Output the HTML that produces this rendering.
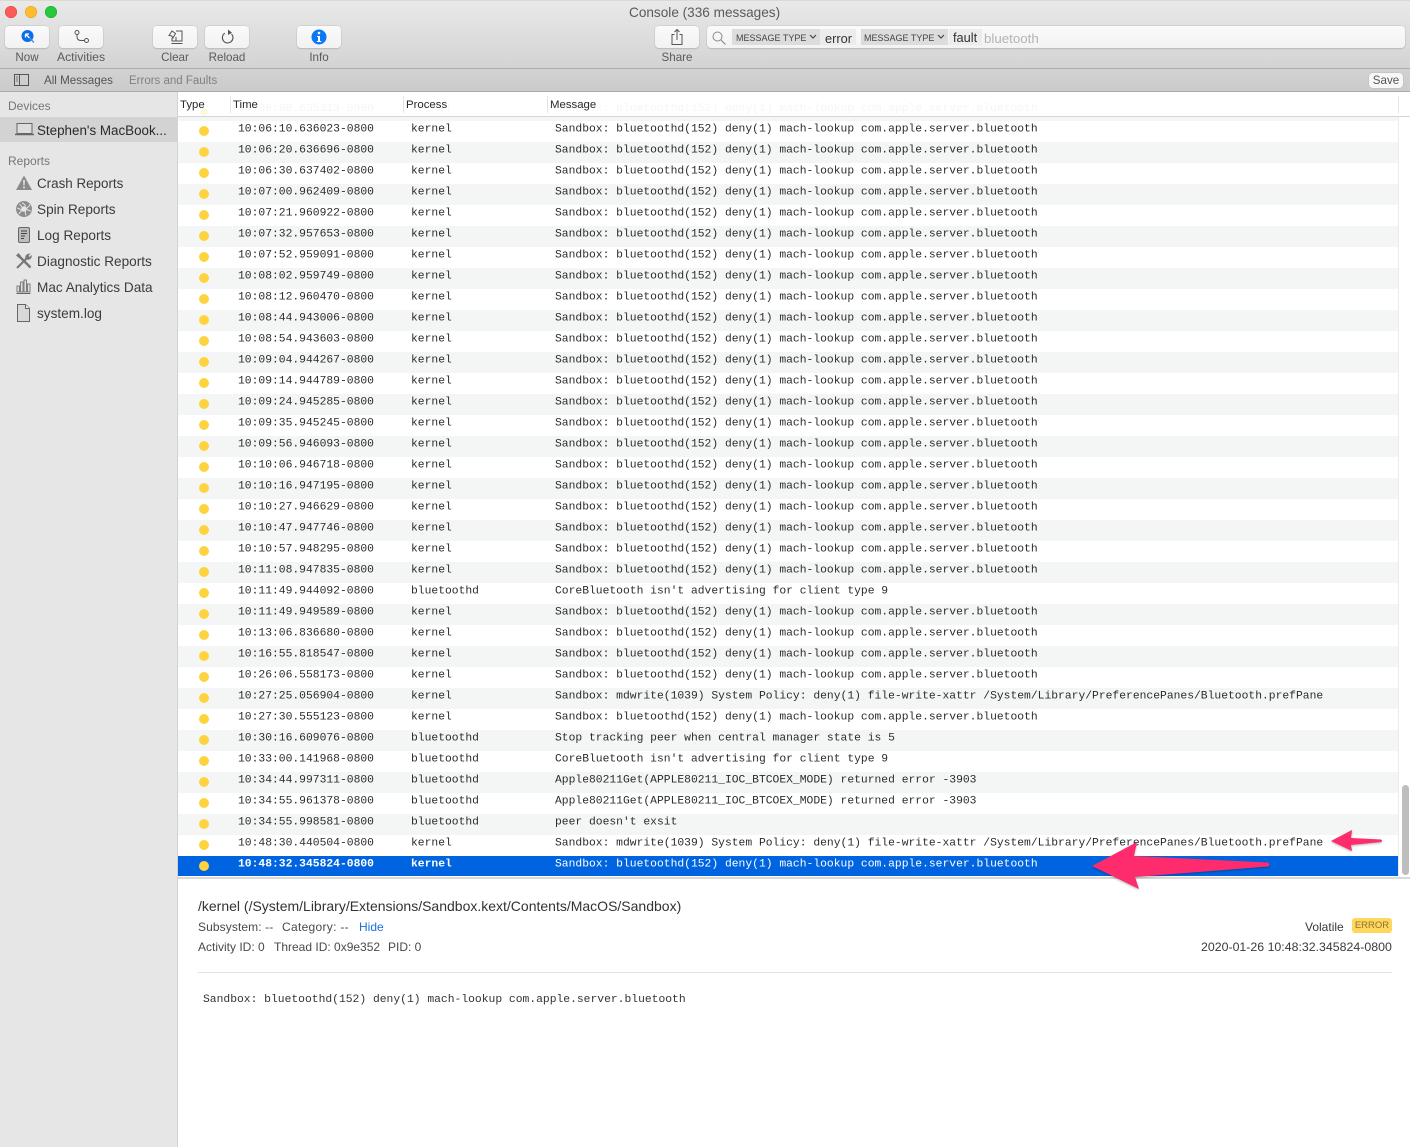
<!DOCTYPE html>
<html><head><meta charset="utf-8"><title>Console</title>
<style>
html,body{margin:0;padding:0;width:1410px;height:1147px;overflow:hidden;background:#fff;font-family:"Liberation Sans",sans-serif}
div,span,svg{position:absolute;white-space:nowrap}
#top{left:0;top:1px;width:1410px;height:67px;background:linear-gradient(#e9e9e9,#d3d3d3);border-bottom:1px solid #aeaeae}
#bar{left:0;top:69px;width:1410px;height:22px;background:linear-gradient(#d2d2d2,#cbcbcb);border-bottom:1px solid #aaa}
.lt{width:12px;height:12px;border-radius:50%;top:6px}
.btn{top:26px;width:44px;height:22px;background:linear-gradient(#fafafa,#f2f2f2);border-radius:4px;box-shadow:0 0 0 .5px #c4c4c4,0 1px 1px #b0b0b0}
.lab{top:51px;font-size:11.6px;line-height:14px;color:#5a5a5a;width:70px;text-align:center}
#side{left:0;top:92px;width:177px;height:1055px;background:#e6e6e6;border-right:1px solid #d2d2d2}
.sh{left:8px;font-size:12px;line-height:14px;color:#767676}
.si{left:37px;font-size:13.6px;line-height:16px;color:#3c3c3c}
.hd{top:98px;font-size:11.4px;line-height:14px;color:#2a2a2a}
#rows{left:178px;top:121px;width:1220px;height:756px}
.r{left:0;width:1220px;height:21px;font:11.33px/14px "Liberation Mono",monospace;color:#2b2b2b}
.g{background:#f4f5f5}
.r b{position:absolute;left:21px;top:5px;width:10px;height:10px;border-radius:50%;background:#fdd43f}
.r i{position:absolute;font-style:normal;white-space:nowrap;top:0;transform:translateY(1.6px)}
.r i:nth-of-type(1){left:60px}.r i:nth-of-type(2){left:233px}.r i:nth-of-type(3){left:377px}
.sel{background:#0064e1;color:#fff;font-weight:bold;height:20px}
.sel i:nth-of-type(3){font-weight:normal}
.d{font-size:12px;line-height:14px;color:#4a4a4a}
</style></head>
<body>
<div id="top"></div>
<div style="left:0;top:0;width:1410px;height:1px;background:#dcd8d2"></div>
<div class="lt" style="left:5px;background:#fc5b57;box-shadow:inset 0 0 0 .5px #df4744"></div>
<div class="lt" style="left:25px;background:#fdbb2e;box-shadow:inset 0 0 0 .5px #de9f34"></div>
<div class="lt" style="left:45px;background:#27c73f;box-shadow:inset 0 0 0 .5px #1dad2b"></div>
<div style="left:629px;top:5px;font-size:13.6px;line-height:16px;color:#5a5a5a">Console (336 messages)</div>

<div class="btn" style="left:5px"><svg style="left:14px;top:2px" width="18" height="18" viewBox="0 0 18 18"><circle cx="8.500" cy="8" r="6" fill="#0a6fe8"/><path d="M6.500 6h3.500M6.500 6v3.500M6.500 6l4 4" stroke="#fff" stroke-width="1.300" fill="none"/><path d="M10.500 10l4.500 4.500" stroke="#4a8ad6" stroke-width="1.300"/></svg></div>
<div class="lab" style="left:-8px">Now</div>
<div class="btn" style="left:59px"><svg style="left:14px;top:3px" width="18" height="16" viewBox="0 0 18 16"><circle cx="4" cy="3.500" r="2" fill="none" stroke="#555"/><circle cx="13.500" cy="11.500" r="2" fill="none" stroke="#555"/><path d="M4 5.500v2c0 3 2 4 4 4H11.500" fill="none" stroke="#555"/></svg></div>
<div class="lab" style="left:46px;top:50px;font-size:12.2px">Activities</div>
<div class="btn" style="left:153px"><svg style="left:14px;top:3px" width="17" height="16" viewBox="0 0 17 16"><path d="M9 2h6v10H5V9" fill="none" stroke="#555"/><path d="M2 6.500L5 2l3.500 2.500L6 9 4.800 7z" fill="none" stroke="#555"/><path d="M9 8v4M4.500 14.500h11" stroke="#555"/></svg></div>
<div class="lab" style="left:140px">Clear</div>
<div class="btn" style="left:205px"><svg style="left:15px;top:2px" width="15" height="17" viewBox="0 0 15 17"><path d="M4.800 5.200A5.300 5.300 0 1 0 11.500 6" fill="none" stroke="#555" stroke-width="1.100"/><path d="M8 1.500L12 4.800L8 7z" fill="#555"/></svg></div>
<div class="lab" style="left:192px">Reload</div>
<div class="btn" style="left:297px"><svg style="left:14px;top:3px" width="16" height="16" viewBox="0 0 16 16"><circle cx="8" cy="8" r="7.500" fill="#0a78f5"/><circle cx="8" cy="4" r="1.300" fill="#fff"/><path d="M6 7h3v5h1.300v1H5.800v-1H7V8H6z" fill="#fff"/></svg></div>
<div class="lab" style="left:284px">Info</div>
<div class="btn" style="left:655px"><svg style="left:15px;top:2px" width="14" height="18" viewBox="0 0 14 18"><path d="M4.500 6.500H2v10h10v-10H9.500M7 12V1.500M4.500 4L7 1.500 9.500 4" fill="none" stroke="#555"/></svg></div>
<div class="lab" style="left:642px">Share</div>

<div style="left:707px;top:26px;width:698px;height:22px;background:linear-gradient(#fafafa,#f3f3f3);border-radius:4px;box-shadow:0 0 0 .5px #c4c4c4,0 1px 1px #b0b0b0"></div>
<svg style="left:711px;top:30px" width="16" height="16" viewBox="0 0 16 16"><circle cx="6.500" cy="6.500" r="4.500" fill="none" stroke="#888"/><path d="M10 10l4.500 4.500" stroke="#888" stroke-width="1.100"/></svg>
<div style="left:732px;top:29px;width:88px;height:16px;background:#dcdcdc"></div>
<div style="left:736px;top:32px;font-size:9px;line-height:13px;color:#444">MESSAGE TYPE</div>
<svg style="left:809px;top:34px" width="8" height="6" viewBox="0 0 8 6"><path d="M1 1l3 3 3-3" fill="none" stroke="#444" stroke-width="1.200"/></svg>
<div style="left:820px;top:29px;width:36px;height:16px;background:#ececec"></div>
<div style="left:825px;top:31px;font-size:12.800px;line-height:15px;color:#333">error</div>
<div style="left:861px;top:29px;width:87px;height:16px;background:#dcdcdc"></div>
<div style="left:864px;top:32px;font-size:9px;line-height:13px;color:#444">MESSAGE TYPE</div>
<svg style="left:937px;top:34px" width="8" height="6" viewBox="0 0 8 6"><path d="M1 1l3 3 3-3" fill="none" stroke="#444" stroke-width="1.200"/></svg>
<div style="left:949px;top:29px;width:33px;height:16px;background:#ececec"></div>
<div style="left:953px;top:30px;font-size:12.800px;line-height:15px;color:#333">fault</div>
<div style="left:984px;top:31px;font-size:13.300px;line-height:15px;color:#b4b4b4">bluetooth</div>

<div id="bar"></div>
<svg style="left:14px;top:74px" width="15" height="12" viewBox="0 0 15 12"><rect x=".5" y=".5" width="14" height="11" fill="none" stroke="#555"/><path d="M5.500 0v12" stroke="#555"/><path d="M2 3h2M2 5h2M2 7h2" stroke="#777"/></svg>
<div style="left:44px;top:74px;font-size:11.6px;line-height:14px;color:#555">All Messages</div>
<div style="left:129px;top:74px;font-size:11.500px;line-height:14px;color:#808080">Errors and Faults</div>
<div style="left:1369px;top:73px;width:34px;height:15px;background:#f7f7f7;border-radius:4px;box-shadow:0 0 0 .5px #bbb;font-size:11.600px;line-height:16px;text-align:center;color:#555">Save</div>

<div id="side"></div>
<div class="sh" style="top:99px">Devices</div>
<div style="left:0;top:117px;width:177px;height:25px;background:#d3d3d3"></div>
<svg style="left:15px;top:123px" width="19" height="13" viewBox="0 0 19 13"><rect x="2" y=".5" width="15" height="10" fill="#ddd" stroke="#666"/><path d="M0 11.500h19" stroke="#666" stroke-width="1.500"/></svg>
<div class="si" style="top:123px;color:#2a2a2a;font-size:13.400px">Stephen's MacBook...</div>
<div class="sh" style="top:154px">Reports</div>
<svg style="left:16px;top:175px" width="16" height="16" viewBox="0 0 16 16"><path d="M8 .5L16 15H0z" fill="#8a8a8a"/><path d="M7.200 5h1.600l-.3 5.500h-1zM7.200 11.500h1.600v1.800H7.200z" fill="#eee"/></svg>
<div class="si" style="top:176px;font-size:13.400px">Crash Reports</div>
<svg style="left:16px;top:201px" width="16" height="16" viewBox="0 0 16 16"><circle cx="8" cy="8" r="8" fill="#8c8c8c"/><circle cx="8" cy="8" r="2.800" fill="#e6e6e6"/><path d="M6 1.500C8 3 9.500 4 9.500 5.500M14 3.500C13 5.500 12 6.500 10.500 7.500M15 10c-2-.5-3.500-1-4.500-2M10 14.500c-.5-2-1-3.500-.5-5M3 13c1-2 2-3 3.500-3.800M1 7c2 .5 3.500 1 4.500 2.500M3.500 3C5 4.500 6 5.500 6 7" stroke="#e4e4e4" fill="none"/></svg>
<div class="si" style="top:202px">Spin Reports</div>
<svg style="left:18px;top:227px" width="12" height="16" viewBox="0 0 12 16"><rect x=".5" y=".5" width="11" height="15" rx="1.500" fill="#bdbdbd" stroke="#666"/><path d="M3 4h6M3 6.500h6M3 9h4M3 11.500h3" stroke="#444"/></svg>
<div class="si" style="top:228px">Log Reports</div>
<svg style="left:16px;top:253px" width="16" height="16" viewBox="0 0 16 16"><path d="M3 3l11.500 11.500" stroke="#777" stroke-width="2.400"/><path d="M1 15L11 5" stroke="#777" stroke-width="2"/><path d="M0 2.500L2.500 0 5 3 3 5z" fill="#777"/><path d="M9.500 6c-1-3 1-5.500 5-5.500L12.500 3l1 1 2.300-2c.4 3.500-2.300 6-6.300 4z" fill="#777"/></svg>
<div class="si" style="top:254px">Diagnostic Reports</div>
<svg style="left:16px;top:279px" width="15" height="15" viewBox="0 0 15 15"><path d="M.5 14.500h14" stroke="#666"/><rect x="1" y="7" width="2.500" height="6" fill="#e0e0e0" stroke="#666" stroke-width=".8"/><rect x="4.500" y="3" width="2.500" height="10" fill="#e0e0e0" stroke="#666" stroke-width=".8"/><rect x="8" y="1" width="2.500" height="12" fill="#e0e0e0" stroke="#666" stroke-width=".8"/><rect x="11.500" y="5" width="2.500" height="8" fill="#e0e0e0" stroke="#666" stroke-width=".8"/></svg>
<div class="si" style="top:280px">Mac Analytics Data</div>
<svg style="left:17px;top:304px" width="13" height="18" viewBox="0 0 13 18"><path d="M.5.500h8l4 4v13H.5z" fill="#d8d8d8" stroke="#666"/><path d="M8.500.5v4h4" fill="#f0f0f0" stroke="#666"/></svg>
<div class="si" style="top:306px">system.log</div>

<div style="left:178px;top:92px;width:1232px;height:24px;background:#fff"></div>
<div style="left:238px;top:102px;font:11.33px/14px 'Liberation Mono',monospace;color:#f5f5f5">10:06:00.635313-0800</div>
<div style="left:411px;top:102px;font:11.33px/14px 'Liberation Mono',monospace;color:#f5f5f5">kernel</div>
<div style="left:555px;top:102px;font:11.33px/14px 'Liberation Mono',monospace;color:#f5f5f5">Sandbox: bluetoothd(152) deny(1) mach-lookup com.apple.server.bluetooth</div>
<div style="left:200px;top:108px;width:8px;height:8px;background:#fdf8e5;border-radius:50%"></div>
<div style="left:178px;top:116px;width:1232px;height:1px;background:#d6d6d6"></div>
<div style="left:178px;top:117px;width:1220px;height:4px;background:#f4f5f5"></div>
<div class="hd" style="left:180px">Type</div>
<div class="hd" style="left:233px">Time</div>
<div class="hd" style="left:406px">Process</div>
<div class="hd" style="left:550px">Message</div>
<div style="left:230px;top:96px;width:1px;height:17px;background:#e4e4e4"></div>
<div style="left:403px;top:96px;width:1px;height:17px;background:#e4e4e4"></div>
<div style="left:547px;top:96px;width:1px;height:17px;background:#e4e4e4"></div>
<div style="left:1398px;top:96px;width:1px;height:17px;background:#e4e4e4"></div>

<div id="rows">
<div class="r" style="top:0"><b></b><i>10:06:10.636023-0800</i><i>kernel</i><i>Sandbox: bluetoothd(152) deny(1) mach-lookup com.apple.server.bluetooth</i></div>
<div class="r g" style="top:21px"><b></b><i>10:06:20.636696-0800</i><i>kernel</i><i>Sandbox: bluetoothd(152) deny(1) mach-lookup com.apple.server.bluetooth</i></div>
<div class="r" style="top:42px"><b></b><i>10:06:30.637402-0800</i><i>kernel</i><i>Sandbox: bluetoothd(152) deny(1) mach-lookup com.apple.server.bluetooth</i></div>
<div class="r g" style="top:63px"><b></b><i>10:07:00.962409-0800</i><i>kernel</i><i>Sandbox: bluetoothd(152) deny(1) mach-lookup com.apple.server.bluetooth</i></div>
<div class="r" style="top:84px"><b></b><i>10:07:21.960922-0800</i><i>kernel</i><i>Sandbox: bluetoothd(152) deny(1) mach-lookup com.apple.server.bluetooth</i></div>
<div class="r g" style="top:105px"><b></b><i>10:07:32.957653-0800</i><i>kernel</i><i>Sandbox: bluetoothd(152) deny(1) mach-lookup com.apple.server.bluetooth</i></div>
<div class="r" style="top:126px"><b></b><i>10:07:52.959091-0800</i><i>kernel</i><i>Sandbox: bluetoothd(152) deny(1) mach-lookup com.apple.server.bluetooth</i></div>
<div class="r g" style="top:147px"><b></b><i>10:08:02.959749-0800</i><i>kernel</i><i>Sandbox: bluetoothd(152) deny(1) mach-lookup com.apple.server.bluetooth</i></div>
<div class="r" style="top:168px"><b></b><i>10:08:12.960470-0800</i><i>kernel</i><i>Sandbox: bluetoothd(152) deny(1) mach-lookup com.apple.server.bluetooth</i></div>
<div class="r g" style="top:189px"><b></b><i>10:08:44.943006-0800</i><i>kernel</i><i>Sandbox: bluetoothd(152) deny(1) mach-lookup com.apple.server.bluetooth</i></div>
<div class="r" style="top:210px"><b></b><i>10:08:54.943603-0800</i><i>kernel</i><i>Sandbox: bluetoothd(152) deny(1) mach-lookup com.apple.server.bluetooth</i></div>
<div class="r g" style="top:231px"><b></b><i>10:09:04.944267-0800</i><i>kernel</i><i>Sandbox: bluetoothd(152) deny(1) mach-lookup com.apple.server.bluetooth</i></div>
<div class="r" style="top:252px"><b></b><i>10:09:14.944789-0800</i><i>kernel</i><i>Sandbox: bluetoothd(152) deny(1) mach-lookup com.apple.server.bluetooth</i></div>
<div class="r g" style="top:273px"><b></b><i>10:09:24.945285-0800</i><i>kernel</i><i>Sandbox: bluetoothd(152) deny(1) mach-lookup com.apple.server.bluetooth</i></div>
<div class="r" style="top:294px"><b></b><i>10:09:35.945245-0800</i><i>kernel</i><i>Sandbox: bluetoothd(152) deny(1) mach-lookup com.apple.server.bluetooth</i></div>
<div class="r g" style="top:315px"><b></b><i>10:09:56.946093-0800</i><i>kernel</i><i>Sandbox: bluetoothd(152) deny(1) mach-lookup com.apple.server.bluetooth</i></div>
<div class="r" style="top:336px"><b></b><i>10:10:06.946718-0800</i><i>kernel</i><i>Sandbox: bluetoothd(152) deny(1) mach-lookup com.apple.server.bluetooth</i></div>
<div class="r g" style="top:357px"><b></b><i>10:10:16.947195-0800</i><i>kernel</i><i>Sandbox: bluetoothd(152) deny(1) mach-lookup com.apple.server.bluetooth</i></div>
<div class="r" style="top:378px"><b></b><i>10:10:27.946629-0800</i><i>kernel</i><i>Sandbox: bluetoothd(152) deny(1) mach-lookup com.apple.server.bluetooth</i></div>
<div class="r g" style="top:399px"><b></b><i>10:10:47.947746-0800</i><i>kernel</i><i>Sandbox: bluetoothd(152) deny(1) mach-lookup com.apple.server.bluetooth</i></div>
<div class="r" style="top:420px"><b></b><i>10:10:57.948295-0800</i><i>kernel</i><i>Sandbox: bluetoothd(152) deny(1) mach-lookup com.apple.server.bluetooth</i></div>
<div class="r g" style="top:441px"><b></b><i>10:11:08.947835-0800</i><i>kernel</i><i>Sandbox: bluetoothd(152) deny(1) mach-lookup com.apple.server.bluetooth</i></div>
<div class="r" style="top:462px"><b></b><i>10:11:49.944092-0800</i><i>bluetoothd</i><i>CoreBluetooth isn't advertising for client type 9</i></div>
<div class="r g" style="top:483px"><b></b><i>10:11:49.949589-0800</i><i>kernel</i><i>Sandbox: bluetoothd(152) deny(1) mach-lookup com.apple.server.bluetooth</i></div>
<div class="r" style="top:504px"><b></b><i>10:13:06.836680-0800</i><i>kernel</i><i>Sandbox: bluetoothd(152) deny(1) mach-lookup com.apple.server.bluetooth</i></div>
<div class="r g" style="top:525px"><b></b><i>10:16:55.818547-0800</i><i>kernel</i><i>Sandbox: bluetoothd(152) deny(1) mach-lookup com.apple.server.bluetooth</i></div>
<div class="r" style="top:546px"><b></b><i>10:26:06.558173-0800</i><i>kernel</i><i>Sandbox: bluetoothd(152) deny(1) mach-lookup com.apple.server.bluetooth</i></div>
<div class="r g" style="top:567px"><b></b><i>10:27:25.056904-0800</i><i>kernel</i><i>Sandbox: mdwrite(1039) System Policy: deny(1) file-write-xattr /System/Library/PreferencePanes/Bluetooth.prefPane</i></div>
<div class="r" style="top:588px"><b></b><i>10:27:30.555123-0800</i><i>kernel</i><i>Sandbox: bluetoothd(152) deny(1) mach-lookup com.apple.server.bluetooth</i></div>
<div class="r g" style="top:609px"><b></b><i>10:30:16.609076-0800</i><i>bluetoothd</i><i>Stop tracking peer when central manager state is 5</i></div>
<div class="r" style="top:630px"><b></b><i>10:33:00.141968-0800</i><i>bluetoothd</i><i>CoreBluetooth isn't advertising for client type 9</i></div>
<div class="r g" style="top:651px"><b></b><i>10:34:44.997311-0800</i><i>bluetoothd</i><i>Apple80211Get(APPLE80211_IOC_BTCOEX_MODE) returned error -3903</i></div>
<div class="r" style="top:672px"><b></b><i>10:34:55.961378-0800</i><i>bluetoothd</i><i>Apple80211Get(APPLE80211_IOC_BTCOEX_MODE) returned error -3903</i></div>
<div class="r g" style="top:693px"><b></b><i>10:34:55.998581-0800</i><i>bluetoothd</i><i>peer doesn't exsit</i></div>
<div class="r" style="top:714px"><b></b><i>10:48:30.440504-0800</i><i>kernel</i><i>Sandbox: mdwrite(1039) System Policy: deny(1) file-write-xattr /System/Library/PreferencePanes/Bluetooth.prefPane</i></div>
<div class="r sel" style="top:735px"><b></b><i>10:48:32.345824-0800</i><i>kernel</i><i>Sandbox: bluetoothd(152) deny(1) mach-lookup com.apple.server.bluetooth</i></div>
</div>

<div style="left:1398px;top:117px;width:1px;height:760px;background:#ececec"></div>
<div style="left:1402px;top:785px;width:7px;height:90px;background:#bdbdbd;border-radius:4px"></div>
<div style="left:178px;top:877px;width:1232px;height:2px;background:#dadada"></div>

<div style="left:198px;top:898px;font-size:14px;line-height:16px;color:#333">/kernel (/System/Library/Extensions/Sandbox.kext/Contents/MacOS/Sandbox)</div>
<div class="d" style="left:198px;top:920px;letter-spacing:.1px">Subsystem: --</div>
<div class="d" style="left:282px;top:920px;letter-spacing:.3px">Category: --</div>
<div class="d" style="left:359px;top:920px;color:#1a6fe0">Hide</div>
<div class="d" style="left:198px;top:940px">Activity ID: 0</div>
<div class="d" style="left:274px;top:940px">Thread ID: 0x9e352</div>
<div class="d" style="left:388px;top:940px">PID: 0</div>
<div class="d" style="left:1305px;top:920px;color:#3a3a3a">Volatile</div>
<div style="left:1352px;top:918px;width:40px;height:15px;background:#fed75c;border-radius:3px;font-size:9.500px;line-height:16px;text-align:center;color:#8e7430">ERROR</div>
<div class="d" style="left:1201px;top:940px;font-size:12.350px;color:#3a3a3a">2020-01-26 10:48:32.345824-0800</div>
<div style="left:198px;top:972px;width:1194px;height:1px;background:#e2e2e2"></div>
<div style="left:203px;top:993px;font:11.33px/14px 'Liberation Mono',monospace;color:#333">Sandbox: bluetoothd(152) deny(1) mach-lookup com.apple.server.bluetooth</div>

<svg style="left:1085px;top:825px;filter:drop-shadow(0 1px 1px rgba(0,0,0,.3))" width="305" height="70" viewBox="1085 825 305 70">
<path d="M1331 841L1352 830L1351 838L1381 839.500Q1383 841 1381 842L1351 845L1352 851Z" fill="#fe2c6c"/>
<path d="M1092 866L1137 842L1134 856L1268 862.500Q1271 865 1268 866.500L1135 877L1139 889Z" fill="#fe2c6c"/>
</svg>
</body></html>
